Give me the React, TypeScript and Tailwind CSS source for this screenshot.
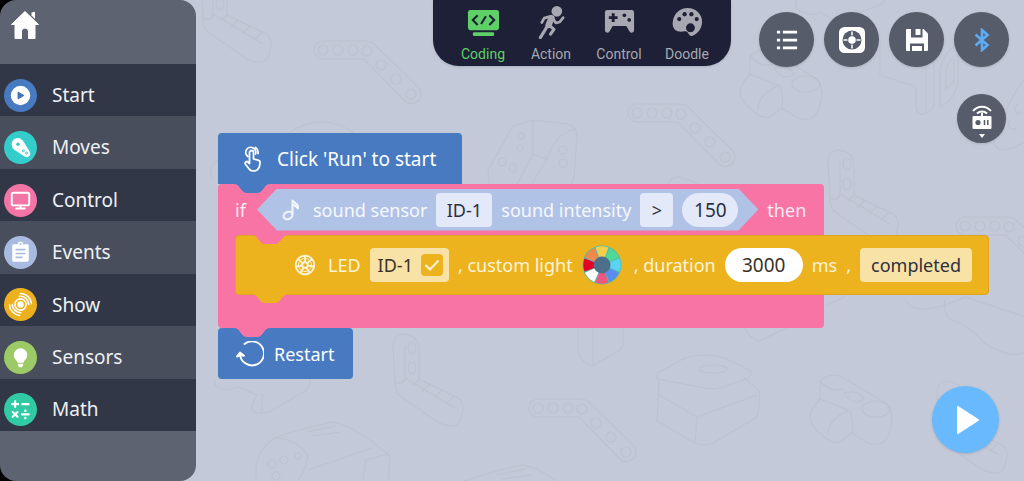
import { useState, type ReactNode } from "react";
import clsx from "clsx";

type IconProps = { className?: string };

/* ---------- icons ---------- */

const HomeIcon = () => (
    <svg viewBox="0 0 28 28" className="w-7 h-7" fill="#fff">
        <path d="M14 .5 27.5 13.5H24V27.5h-6.5v-7a3.5 3.5 0 0 0-7 0v7H4V13.5H.5L14 .5Z" stroke="#fff" strokeLinejoin="round" />
        <path d="M20.5 1.5 24 .8V8l-3.5-3.4V1.5Z" />
    </svg>
);

const PlayDiscIcon = () => (
    <svg viewBox="0 0 34 34" className="w-full h-full">
        <circle cx="17" cy="17" r="10" fill="#fff" />
        <path d="M14.5 13.5 20.5 17l-6 3.5Z" fill="#3f73b8" stroke="#3f73b8" strokeLinejoin="round" />
    </svg>
);

const ServoIcon = () => (
    <svg viewBox="0 0 34 34" className="w-full h-full">
        <path d="M8.3 16.5a6.6 6.6 0 1 1 12.3-5L26.4 21a3.8 3.8 0 0 1-5.6 5L10.6 19.2a6.6 6.6 0 0 1-2.3-2.7Z" fill="#fff" />
        <circle cx="14.4" cy="13.6" r="1.8" fill="#35c8c8" />
        <circle cx="20" cy="20.4" r="1" fill="none" stroke="#35c8c8" />
        <circle cx="23.2" cy="22.8" r="1" fill="none" stroke="#35c8c8" />
    </svg>
);

const MonitorIcon = () => (
    <svg viewBox="0 0 34 34" className="w-full h-full" fill="none" stroke="#fff" strokeWidth="2">
        <rect x="8" y="9" width="18" height="13" rx="2" />
        <path d="M12.5 25.2h9M17 22v3" strokeLinecap="round" />
    </svg>
);

const ClipboardIcon = () => (
    <svg viewBox="0 0 34 34" className="w-full h-full">
        <path d="M10 8.5h4.2a2.8 2.8 0 0 1 5.6 0H24a1.5 1.5 0 0 1 1.5 1.5v15a1.5 1.5 0 0 1-1.5 1.5H10A1.5 1.5 0 0 1 8.5 25V10A1.5 1.5 0 0 1 10 8.5Z" fill="#fff" />
        <circle cx="17" cy="8.3" r="1" fill="#a9bbe0" />
        <path d="M12.5 14h9M12.5 18h9M12.5 22h6" stroke="#a9bbe0" strokeWidth="1.7" strokeLinecap="round" />
    </svg>
);

const WavesIcon = () => (
    <svg viewBox="0 0 34 34" className="w-full h-full" fill="none" stroke="#fff" strokeWidth="1.6" strokeLinecap="round">
        <circle cx="17" cy="17" r="3.3" fill="#fff" stroke="none" />
        <circle cx="17" cy="17" r="5.8" />
        <path d="M16 8.6a8.6 8.6 0 0 1 9.5 8.4M8.5 17a8.6 8.6 0 0 0 9 8.4M17 5.7a11.5 11.5 0 0 1 11.3 10.3M5.7 17.5a11.5 11.5 0 0 0 10.3 10.8" />
    </svg>
);

const BulbIcon = () => (
    <svg viewBox="0 0 34 34" className="w-full h-full" fill="#fff">
        <path d="M17 7.5a7 7 0 0 1 7 7c0 3-1.8 4.5-3.2 6.2-.5.7-.6 1.3-.8 1.8h-6c-.2-.5-.3-1.1-.8-1.8C11.8 19 10 17.5 10 14.5a7 7 0 0 1 7-7Z" />
        <path d="M14.3 23.5h5.4v1.2l-1.2 2.3h-3l-1.2-2.3Z" />
    </svg>
);

const MathIcon = () => (
    <svg viewBox="0 0 34 34" className="w-full h-full" fill="none" stroke="#fff" strokeWidth="2.2" strokeLinecap="round">
        <path d="M11.5 8.5v6M8.5 11.5h6M18.8 11.5h6.4M9 19.5l5 5M14 19.5l-5 5M18.5 22h7" />
        <circle cx="22" cy="18.3" r=".5" strokeWidth="1.5" />
        <circle cx="22" cy="25.7" r=".5" strokeWidth="1.5" />
    </svg>
);

const CodeScreenIcon = ({ className }: IconProps) => (
    <svg viewBox="0 0 34 32" className={className}>
        <rect x="1" y="3" width="32" height="21" rx="2.5" fill="currentColor" />
        <path d="M11 8.5 6 13.5l5 5M23 8.5l5 5-5 5M19.5 9.5l-5 8" fill="none" stroke="#1d2036" strokeWidth="2.2" />
        <rect x="6" y="26" width="22" height="4" rx="1.5" fill="currentColor" />
    </svg>
);

const RunnerIcon = ({ className }: IconProps) => (
    <svg viewBox="0 0 34 34" className={className} fill="none" stroke="currentColor" strokeLinecap="round" strokeLinejoin="round">
        <circle cx="22.5" cy="5.5" r="5.5" fill="currentColor" stroke="none" />
        <path d="M17 12.5 14 19.5" strokeWidth="6.5" />
        <path d="M15 11 9.5 12.5 7 17M18.5 13l3 4.5 4-1 3.5-4.5" strokeWidth="2.8" />
        <path d="m12.5 21-3.5 6-3.5 5.5M15.5 20.5l4 3.5-3.5 5" strokeWidth="3.2" />
    </svg>
);

const GamepadIcon = ({ className }: IconProps) => (
    <svg viewBox="0 0 34 32" className={className}>
        <path d="M4.5 3h25A2.5 2.5 0 0 1 32 5.5v18.5a2.5 2.5 0 0 1-4.5 1.5L24 19.5H10L6.5 25.5A2.5 2.5 0 0 1 2 24V5.5A2.5 2.5 0 0 1 4.5 3Z" fill="currentColor" />
        <path d="M10.5 6.5v9M6 11h9" stroke="#1d2036" strokeWidth="3" />
        <circle cx="22" cy="8.5" r="1.9" fill="#1d2036" />
        <circle cx="27" cy="13.3" r="1.9" fill="#1d2036" />
    </svg>
);

const PaletteIcon = ({ className }: IconProps) => (
    <svg viewBox="0 0 34 32" className={className}>
        <path d="M17 1c8.5 0 15 6 15 14 0 7-4 12-9 14.5-1.5.8-3 .7-4-.5-1.5-2-2-4.5-5-4-4 .8-7.5.5-10-1.5C1 20 1.5 16 2.5 12 4.5 5.5 10 1 17 1Z" fill="currentColor" />
        <g fill="#1d2036">
            <circle cx="20" cy="21.5" r="4.6" />
            <circle cx="8.5" cy="12.5" r="2.2" />
            <circle cx="14" cy="7.5" r="2.2" />
            <circle cx="21" cy="7.5" r="2.2" />
            <circle cx="26.5" cy="12.5" r="2.2" />
        </g>
    </svg>
);

const ListIcon = () => (
    <svg viewBox="0 0 24 24" className="w-[22px] h-[22px]" stroke="#fff" strokeWidth="3">
        <path d="M1 3.5H4.5M1 12H4.5M1 20.5H4.5M7.5 3.5h15.5M7.5 12h15.5M7.5 20.5h15.5" />
    </svg>
);

const TargetIcon = () => (
    <svg viewBox="0 0 26 26" className="w-[26px] h-[26px]">
        <rect width="26" height="26" rx="5.5" fill="#fff" />
        <circle cx="13" cy="13" r="9.5" fill="#575c6b" />
        <circle cx="13" cy="13" r="3.8" fill="#fff" />
        <path d="M13 4.5v4M13 17.5v4M4.5 13h4M17.5 13h4" stroke="#fff" strokeWidth="1.5" />
    </svg>
);

const SaveIcon = () => (
    <svg viewBox="0 0 24 24" className="w-6 h-6">
        <path d="M2 1h16.5L23 5.5V22a1 1 0 0 1-1 1H2a1 1 0 0 1-1-1V2a1 1 0 0 1 1-1Z" fill="#fff" />
        <path d="M6 1v8.5h11.5V1h-2v6h-5V1Z" fill="#575c6b" />
        <path d="M5 23v-7.5h14V23h-2v-5H7v5Z" fill="#575c6b" />
    </svg>
);

const BluetoothIcon = () => (
    <svg viewBox="0 0 16 24" className="w-4 h-6" fill="none" stroke="#5cabf5" strokeWidth="2.6">
        <path d="m1.5 6.5 12 10.5L8 22V2l5.5 5-12 10.5" />
    </svg>
);

const RemoteIcon = () => (
    <svg viewBox="0 0 20 36" className="w-5 h-9 mt-1">
        <path d="M1 8a11.5 11.5 0 0 1 18 0M5 10.5a7 7 0 0 1 10 0" fill="none" stroke="#fff" strokeWidth="2" />
        <path d="M10 10v4" stroke="#fff" strokeWidth="2" />
        <rect x=".5" y="13" width="19" height="13" rx="1" fill="#fff" />
        <circle cx="6" cy="19.5" r="2.6" fill="#575c6b" />
        <path d="M12.5 17v5M15.8 17v5" stroke="#575c6b" strokeWidth="1.5" />
        <path d="M7 31h6l-3 4Z" fill="#fff" />
    </svg>
);

const TapIcon = () => (
    <svg viewBox="0 0 18 28" className="w-[18px] h-7" fill="none" stroke="#fff" strokeWidth="1.8" strokeLinecap="round" strokeLinejoin="round">
        <path d="M4 11.5A5 5 0 1 1 11.5 9M11.5 2.5a6 6 0 0 1 2.5 6" />
        <path d="M5.5 7.5a2 2 0 0 1 4 0V14l4.5 1.2a2.5 2.5 0 0 1 2 2.8c-.2 2.8-.8 5.5-3 7-2.5 1.6-6 1.2-8-1.2l-3.5-4.6a1.6 1.6 0 0 1 2.3-2.2l1.700 1.5V7.5Z" />
    </svg>
);

const NoteIcon = () => (
    <svg viewBox="0 0 18 22" className="w-[18px] h-[22px]" fill="none" stroke="#f2f5fc" strokeWidth="2" strokeLinecap="round" strokeLinejoin="round">
        <path d="M10.5 15.5V1.5c1 2 4.5 2.5 5.5 5.5v2.5M10.5 5.5c2 .5 4 2 5.500 4" />
        <ellipse cx="6" cy="16.5" rx="4.6" ry="3.6" transform="rotate(-25 6 16.5)" />
    </svg>
);

const LedIcon = () => (
    <svg viewBox="0 0 22 22" className="w-[22px] h-[22px]" fill="none" stroke="#fdf3d6" strokeWidth="1.9">
        <circle cx="11" cy="11" r="9.3" />
        <circle cx="11" cy="11" r="2.8" />
        <path d="M11 8V1.5M13.3 9.1l4.9-4.2M14 11.5l6.3 1.2M12.5 13.7l3.3 5.6M9.5 13.7l-3.3 5.6M8 11.5l-6.3 1.2M8.7 9.1 3.8 4.9" />
        <circle cx="11" cy="11" r="6.5" strokeWidth="1" />
    </svg>
);

const RestartIcon = () => (
    <svg viewBox="0 0 28 26" className="w-7 h-[26px]" fill="none" stroke="#fff" strokeWidth="1.9" strokeLinecap="round">
        <path d="M8.5 3A12 12 0 1 1 4 13" />
        <path d="M.8 15.5 4 11.5l4 3.2-3.5-.7Z" strokeLinejoin="round" />
    </svg>
);

const LIGHT_COLORS = ["#f2d04b", "#4fd896", "#5bd3f2", "#5b8def", "#f0587f", "#ffffff", "#e60023", "#ef8a4c"];

const ColorWheel = () => (
    <svg viewBox="-20 -20 40 40" className="w-10 h-10">
        <circle r="19.5" fill="#52bcab" />
        {LIGHT_COLORS.map((color, i) => (
            <path key={color} d="M0 0-6.5-17.5A19 19 0 0 1 6.5-17.5Z" fill={color} transform={`rotate(${i * 45})`} />
        ))}
        <circle r="8.5" fill="#4d6f8c" />
    </svg>
);

/* ---------- canvas pattern ---------- */

const Beam = ({ x, y }: { x: number; y: number }) => (
    <g transform={`translate(${x} ${y})`}>
        <path d="M9 0H52Q57 0 61 4L104 46A9 9 0 0 1 91 60L50 18H9A9 9 0 0 1 9 0Z" />
        <circle cx="9" cy="9" r="5" />
        <circle cx="24" cy="9" r="5" />
        <circle cx="39" cy="9" r="5" />
        <circle cx="53" cy="10" r="5" />
        <circle cx="67" cy="24" r="5" />
        <circle cx="82" cy="38" r="5" />
        <circle cx="97" cy="53" r="5" />
    </g>
);

const Corner = ({ x, y }: { x: number; y: number }) => (
    <g transform={`translate(${x} ${y})`}>
        <path d="M1 10Q2 0 12 0q13 2 15 12v33l39 19q5 3 5 9-1 19-11 19-8 0-16-5L8 62Q3 58 3 48Z" />
        <path d="M3 48q8 4 10-4V12M13 44l50 30M27 45l-6 6M38 50l-8 8M50 56l-8 8M62 62l-8 8" />
        <ellipse cx="20" cy="14" rx="4" ry="6" />
        <ellipse cx="20" cy="34" rx="4" ry="6" />
    </g>
);

const Joint = ({ x, y }: { x: number; y: number }) => (
    <g transform={`translate(${x} ${y})`}>
        <path d="M10 6Q20-3 32 2L72 26q10 6 10 18-2 20-10 24-8 3-16-1L42 58 30 67q-8 2-14-4Q2 54 0 44q0-10 10-20Z" />
        <path d="M10 24q10 4 30 12 4 10 2 22M18 60q0-16 20-24M10 6q10 12 24 8M34 18q14-4 20 6-10 8-20-6Z" />
        <ellipse cx="66" cy="34" rx="14" ry="8" />
    </g>
);

const Brick = ({ x, y }: { x: number; y: number }) => (
    <g transform={`translate(${x} ${y})`}>
        <path d="M0 50 25 6 45 0 80 4q9 3 9 12l-3 40-8 22H2Z" />
        <path d="M45 0v34l-18 34M45 34l14 5L40 70M59 39q8-26 29-30M2 64l24 8" />
        <circle cx="33" cy="16" r="3" />
        <circle cx="32" cy="28" r="3" />
        <circle cx="14" cy="42" r="4" />
        <circle cx="25" cy="48" r="4" />
        <circle cx="75" cy="30" r="4" />
        <circle cx="75" cy="43" r="4" />
    </g>
);

const Motor = ({ x, y }: { x: number; y: number }) => (
    <g transform={`translate(${x} ${y})`}>
        <path d="M0 48Q0 30 18 16q26-9 58-16 20 2 58 34l-2 30H0Z" />
        <path d="M18 16q22 0 34 18-2 16-14 30M52 48l64-22M106 64l4-26 22-6M50 10l30-6M55 14l30-4" />
        <circle cx="16" cy="42" r="4" />
        <circle cx="28" cy="38" r="4" />
        <circle cx="20" cy="54" r="4" />
        <circle cx="42" cy="34" r="3" />
    </g>
);

const Base = ({ x, y }: { x: number; y: number }) => (
    <g transform={`translate(${x} ${y})`}>
        <path d="M2 18 30 3q20-6 40 0l24 12q4 4 0 8L64 33q-8 2-14 0L2 24Z" />
        <path d="M4 26 2 66l38 22q10 4 18 0l44-26q4-14 2-26L88 22M40 88l2-26 60-22M4 40l38 22" />
        <ellipse cx="58" cy="14" rx="14" ry="4" />
    </g>
);

const Arm = ({ x, y }: { x: number; y: number }) => (
    <g transform={`translate(${x} ${y})`}>
        <path d="M0 0v30l36 12v22q4 8 10 4l8-6V4M46 68V20M60 62V24Q64 8 74 2M60 62q16-8 18-26V0M66 44V24q2-8 8-10v22Z" />
    </g>
);

const CanvasPattern = () => (
    <svg className="absolute inset-0 w-full h-full" fill="none" stroke="#b3b8c3" strokeWidth="1.2" strokeOpacity=".4" aria-hidden="true">
        <Corner x={200} y={-30} />
        <Beam x={314} y={41} />
        <Brick x={488} y={120} />
        <path d="M288 134q16-13 36-12 16 1 30 11M212 180q-4-14 6-20" />
        <Beam x={628} y={104} />
        <Joint x={740} y={50} />
        <Arm x={880} y={45} />
        <Corner x={827} y={150} />
        <Beam x={956} y={217} />
        <path d="M796 0v8q14 10 24 4 10 6 16 10l46-18 8-10M668 184q4-8 12-7 10 3 18 7" />
        <path d="M1024 80q-14 18-22 40l-8 18q-2 10 10 12 12-2 20-8M1018 104a4 5 0 1 0 4 8M1010 120a4 5 0 1 0 6 8" />
        <path d="M215 379v6q8 8 22 2 12 4 20 8-12 18 4 18 4 0 10-2l34-20q6-4 5-12M262 394v18" />
        <Corner x={392} y={334} />
        <Beam x={529} y={399} />
        <Motor x={256} y={422} />
        <Motor x={446} y={465} />
        <Base x={655} y={355} />
        <Joint x={810} y={375} />
        <path d="M578 328v24q2 10 14 14l28-16q4-4 3-14v-8M593 366v-38" />
        <path d="M745 328q4 10 14 13l28-13M828 305l16-8v-4" />
        <Corner x={936} y={381} />
        <path d="M905 300q10 15 40 5l20-8 60 20v35q-15 8-42-10-10-14-35-24-5-10-3-18" />
    </svg>
);

/* ---------- sidebar ---------- */

const CATEGORIES = [
    { name: "Start", color: "bg-[#477ac0]", icon: <PlayDiscIcon /> },
    { name: "Moves", color: "bg-[#35cccc]", icon: <ServoIcon /> },
    { name: "Control", color: "bg-[#f375a5]", icon: <MonitorIcon /> },
    { name: "Events", color: "bg-[#a9bbe0]", icon: <ClipboardIcon /> },
    { name: "Show", color: "bg-[#edb120]", icon: <WavesIcon /> },
    { name: "Sensors", color: "bg-[#9cca66]", icon: <BulbIcon /> },
    { name: "Math", color: "bg-[#30cba4]", icon: <MathIcon /> },
];

const Sidebar = () => (
    <aside className="relative flex shrink-0 w-[196px] bg-linear-to-r from-black from-50% to-[#c3c9d8] to-50%">
        <div className="flex flex-1 flex-col overflow-hidden bg-[#5e6371] rounded-[16px]">
            <div className="h-16 pt-[11px] pl-[11px]">
                <button aria-label="Home" className="block"><HomeIcon /></button>
            </div>
            <nav className="flex flex-1 flex-col">
                {CATEGORIES.map((cat, i) => (
                    <button
                        key={cat.name}
                        className={clsx(
                            "flex flex-1 items-center gap-[15px] pl-1 pt-2.5 min-h-12 text-[19px] text-[#eef0f4]",
                            i % 2 === 0 ? "bg-[#313747]" : "bg-[#484e5c]"
                        )}
                    >
                        <span className={clsx("w-[33px] h-[33px] rounded-full", cat.color)}>{cat.icon}</span>
                        {cat.name}
                    </button>
                ))}
            </nav>
            <div className="h-[50px]" />
        </div>
    </aside>
);

/* ---------- top bar ---------- */

const TABS = [
    { name: "Coding", Icon: CodeScreenIcon },
    { name: "Action", Icon: RunnerIcon },
    { name: "Control", Icon: GamepadIcon },
    { name: "Doodle", Icon: PaletteIcon },
];

const ModeTabs = () => {
    const [active, setActive] = useState("Coding");

    return (
        <nav className="flex w-[298px] h-[66px] pl-4 pt-1.5 bg-[#1d2036] rounded-b-[26px] shadow-sm font-['Roboto',sans-serif]">
            {TABS.map(({ name, Icon }) => (
                <button
                    key={name}
                    onClick={() => setActive(name)}
                    className={clsx(
                        "flex flex-col items-center w-[68px] text-[14px] leading-4",
                        active === name ? "text-[#5fd068]" : "text-[#a7a8b1]"
                    )}
                >
                    <Icon className="w-[33px] h-[33px] mb-[7px]" />
                    {name}
                </button>
            ))}
        </nav>
    );
};

const RoundButton = ({ label, children }: { label: string; children: ReactNode }) => (
    <button aria-label={label} className="flex items-center justify-center w-[55px] h-[55px] rounded-full bg-[#575c6b] shadow">
        {children}
    </button>
);

/* ---------- blocks ---------- */

// connector that hangs from the bottom of a block over the next one
const Tab = ({ className }: IconProps) => (
    <svg viewBox="0 0 36 9" className={clsx("absolute top-full left-4 z-10 w-9 h-[9px]", className)} fill="currentColor">
        <path d="M0 0Q3 0 4.5 2L8 6.5Q10 9 13 9H23Q26 9 28 6.5L31.5 2Q33 0 36 0Z" />
    </svg>
);

const Field = ({ className, children }: { className: string; children: ReactNode }) => (
    <button className={clsx("h-[34px] rounded-[4px] text-center text-[#2c3040]", className)}>{children}</button>
);

const Script = () => {
    const [threshold, setThreshold] = useState("150");
    const [duration, setDuration] = useState("3000");
    const [ledOn, setLedOn] = useState(true);

    return (
        <div className="flex flex-col items-start text-[18px] leading-6 whitespace-nowrap">
            <div className="relative flex items-center gap-[15px] h-[51px] pl-[26px] pr-[26px] rounded-t-[4px] bg-[#477ac0] text-[19px] text-white">
                <TapIcon />
                Click 'Run' to start
                <Tab className="text-[#477ac0]" />
            </div>

            <div className="relative w-max rounded-[4px] bg-[#f774a5] text-[#fdeaf2]">
                <div className="flex items-center h-[51px] pl-[17px] pr-[18px]">
                    <span className="w-[22px]">if</span>
                    <div className="flex items-center gap-[9px] h-[42px] pl-[25px] pr-5 bg-[#b0c3e7] text-[#f6f8fd] [clip-path:polygon(20px_0,calc(100%_-_20px)_0,100%_50%,calc(100%_-_20px)_100%,20px_100%,0_50%)]">
                        <NoteIcon />
                        <span className="pl-1">sound sensor</span>
                        <Field className="w-14 bg-[#e3e9f8]">ID-1</Field>
                        <span>sound intensity</span>
                        <Field className="w-[33px] bg-[#e3e9f8]">&gt;</Field>
                        <input
                            aria-label="Sound intensity"
                            value={threshold}
                            onChange={(e) => setThreshold(e.target.value)}
                            className="w-14 h-[34px] rounded-full bg-[#e3e9f8] text-center text-[19px] text-[#2c3040]"
                        />
                    </div>
                    <span className="pl-[9px]">then</span>
                </div>

                {/* w-0 + min-w-full: the nested block may be wider than its parent */}
                <div className="w-0 min-w-full pl-[17px]">
                    <div className="relative flex items-center w-max h-[60px] pl-[58px] pr-4 rounded-[4px] border border-[#dba51f] bg-[#edb31f] text-[#fdf3d6]">
                        <svg viewBox="0 0 36 9" className="absolute -top-px left-4 w-9 h-[9px]" fill="#f774a5">
                            <path d="M0 0Q3 0 4.5 2L8 6.5Q10 9 13 9H23Q26 9 28 6.5L31.5 2Q33 0 36 0Z" />
                        </svg>
                        <LedIcon />
                        <span className="pl-3 pr-[9px]">LED</span>
                        <label className="flex items-center gap-2 h-[34px] pl-2 pr-1.5 rounded-[4px] bg-[#f9e2a6] text-[#3a3226]">
                            ID-1
                            <span className="grid">
                                <input
                                    type="checkbox"
                                    checked={ledOn}
                                    onChange={(e) => setLedOn(e.target.checked)}
                                    className="peer appearance-none col-start-1 row-start-1 w-[22px] h-[22px] rounded-[4px] bg-[#edb31f]"
                                />
                                <svg viewBox="0 0 22 22" className="col-start-1 row-start-1 w-[22px] h-[22px] pointer-events-none invisible peer-checked:visible" fill="none" stroke="#fdf3d6" strokeWidth="2">
                                    <path d="m4.5 11 4.5 4.5 8.5-9" />
                                </svg>
                            </span>
                        </label>
                        <span className="px-[9px]">, custom light</span>
                        <button aria-label="Light color"><ColorWheel /></button>
                        <span className="pl-3 pr-[9px]">, duration</span>
                        <input
                            aria-label="Duration"
                            value={duration}
                            onChange={(e) => setDuration(e.target.value)}
                            className="w-[78px] h-[34px] rounded-full bg-white text-center text-[19px] text-[#3a3226]"
                        />
                        <span className="pl-[9px]">ms</span>
                        <span className="px-[9px]">,</span>
                        <Field className="w-28 bg-[#f9e2a6]">completed</Field>
                        <Tab className="text-[#edb31f]" />
                    </div>
                </div>

                <div className="h-[33px]" />
                <Tab className="text-[#f774a5]" />
            </div>

            <div className="flex items-center gap-2.5 h-[51px] px-[18px] rounded-[4px] bg-[#477ac0] text-white">
                <RestartIcon />
                Restart
            </div>
        </div>
    );
};

export default function App() {
    return (
        <div className="relative flex min-h-screen overflow-hidden bg-[#c3c9d8] font-['Noto_Sans','Open_Sans',sans-serif]">
            <CanvasPattern />
            <Sidebar />

            <main className="relative flex-1 min-w-0">
                <header className="flex justify-end gap-7 pr-[15px]">
                    <ModeTabs />
                    <div className="flex gap-2.5 pt-3">
                        <RoundButton label="List"><ListIcon /></RoundButton>
                        <RoundButton label="Calibrate"><TargetIcon /></RoundButton>
                        <RoundButton label="Save"><SaveIcon /></RoundButton>
                        <RoundButton label="Bluetooth"><BluetoothIcon /></RoundButton>
                    </div>
                </header>

                <div className="pt-[66px] pl-[22px]">
                    <Script />
                </div>

                {/* floating controls over the canvas */}
                <button aria-label="Remote" className="absolute top-[94px] right-[18px] flex items-center justify-center w-[49px] h-[49px] rounded-full bg-[#575c6b] shadow">
                    <RemoteIcon />
                </button>
                <button aria-label="Run" className="absolute bottom-7 right-[25px] flex items-center justify-center w-[67px] h-[67px] rounded-full bg-[#69b9fe] shadow">
                    <svg viewBox="0 0 24 30" className="w-6 h-[30px] ml-1" fill="#fff" stroke="#fff" strokeWidth="2" strokeLinejoin="round">
                        <path d="M2 2v26l20-13Z" />
                    </svg>
                </button>
            </main>
        </div>
    );
}
